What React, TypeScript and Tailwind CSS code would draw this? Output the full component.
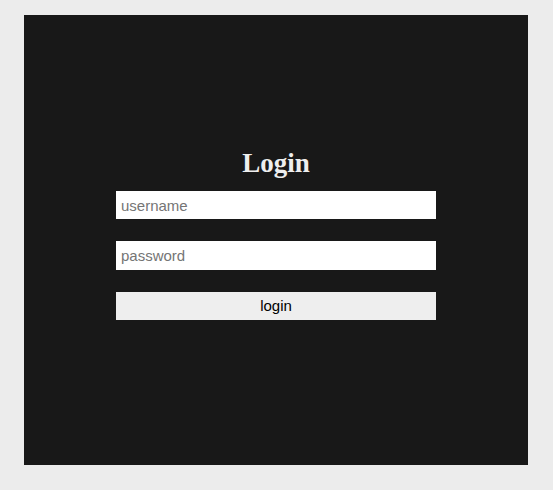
import React from "react";

export default function App() {
  return (
    <div className="min-h-[490px] w-full bg-[#ececec] pl-[24px] pt-[15px]">
      <div className="flex h-[450px] w-[504px] flex-col items-center bg-[#181818] pt-[133px]">
        {/* Title */}
        <h2 className="font-['Liberation_Serif',serif] text-[27px] font-bold leading-[31px] text-[#eeeeee]">
          Login
        </h2>

        <form className="mt-[12px] flex w-[320px] flex-col" onSubmit={(e) => e.preventDefault()}>
          <input
            type="text"
            placeholder="username"
            className="h-[28px] w-full bg-white pl-[5px] font-['Liberation_Sans',Arial,sans-serif] text-[15px] text-black outline-none placeholder:text-[#757575]"
          />
          <input
            type="password"
            placeholder="password"
            className="mt-[22px] h-[29px] w-full bg-white pl-[5px] font-['Liberation_Sans',Arial,sans-serif] text-[15px] text-black outline-none placeholder:text-[#757575]"
          />
          <button
            type="submit"
            className="mt-[22px] h-[28px] w-full bg-[#eeeeee] font-['Liberation_Sans',Arial,sans-serif] text-[15px] text-black"
          >
            login
          </button>
        </form>
      </div>
    </div>
  );
}
